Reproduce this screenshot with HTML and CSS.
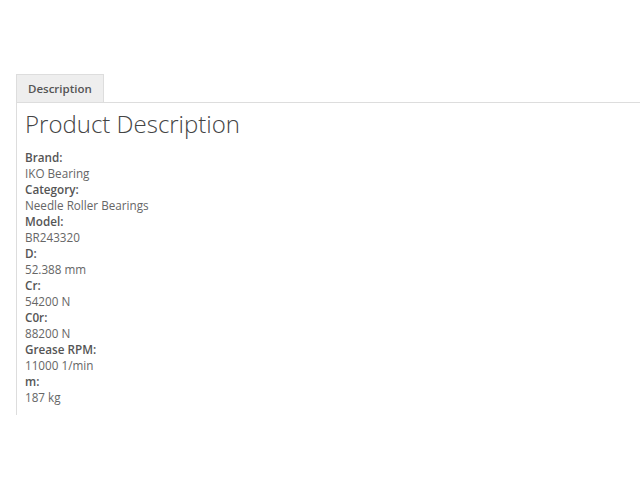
FILE: index.html
```html
<!DOCTYPE html>
<html lang="en">
<head>
  <meta charset="UTF-8">
  <title>Product Description</title>
  <link rel="stylesheet" href="styles.css">
</head>
<body>
  <!-- Tabs -->
  <div class="tabs">
    <ul class="tab-nav">
      <li class="tab active">Description</li>
    </ul>
    <div class="tab-panel">
      <h2>Product Description</h2>
      <dl class="specs">
        <dt>Brand:</dt><dd>IKO Bearing</dd>
        <dt>Category:</dt><dd>Needle Roller Bearings</dd>
        <dt>Model:</dt><dd>BR243320</dd>
        <dt>D:</dt><dd>52.388 mm</dd>
        <dt>Cr:</dt><dd>54200 N</dd>
        <dt>C0r:</dt><dd>88200 N</dd>
        <dt>Grease RPM:</dt><dd>11000 1/min</dd>
        <dt>m:</dt><dd>187 kg</dd>
      </dl>
    </div>
  </div>
</body>
</html>
```

FILE: styles.css
```css
body {
  margin: 0;
  padding: 0;
  font-family: 'Open Sans', sans-serif;
  background: #fff;
  color: #666;
}

.tabs {
  padding: 74px 0 0 16px;
}

.tab-nav {
  list-style: none;
  margin: 0;
  padding: 0;
  display: flex;
}

.tab {
  font-size: 11.5px;
  font-weight: 600;
  color: #555;
  background: #eee;
  border: 1px solid #ddd;
  border-bottom: none;
  padding: 6px 11px;
  line-height: 15px;
}

.tab-panel {
  border-top: 1px solid #ddd;
  border-left: 1px solid #ddd;
  padding: 5px 8px 10px;
}

.tab-panel h2 {
  margin: 0 0 9px;
  font-size: 24px;
  font-weight: 300;
  color: #444;
  line-height: 32px;
}

.specs {
  margin: 0;
  font-size: 11.7px;
  line-height: 16px;
}

.specs dt {
  font-weight: 600;
  color: #555;
}

.specs dd {
  margin: 0;
  color: #666;
}
```
